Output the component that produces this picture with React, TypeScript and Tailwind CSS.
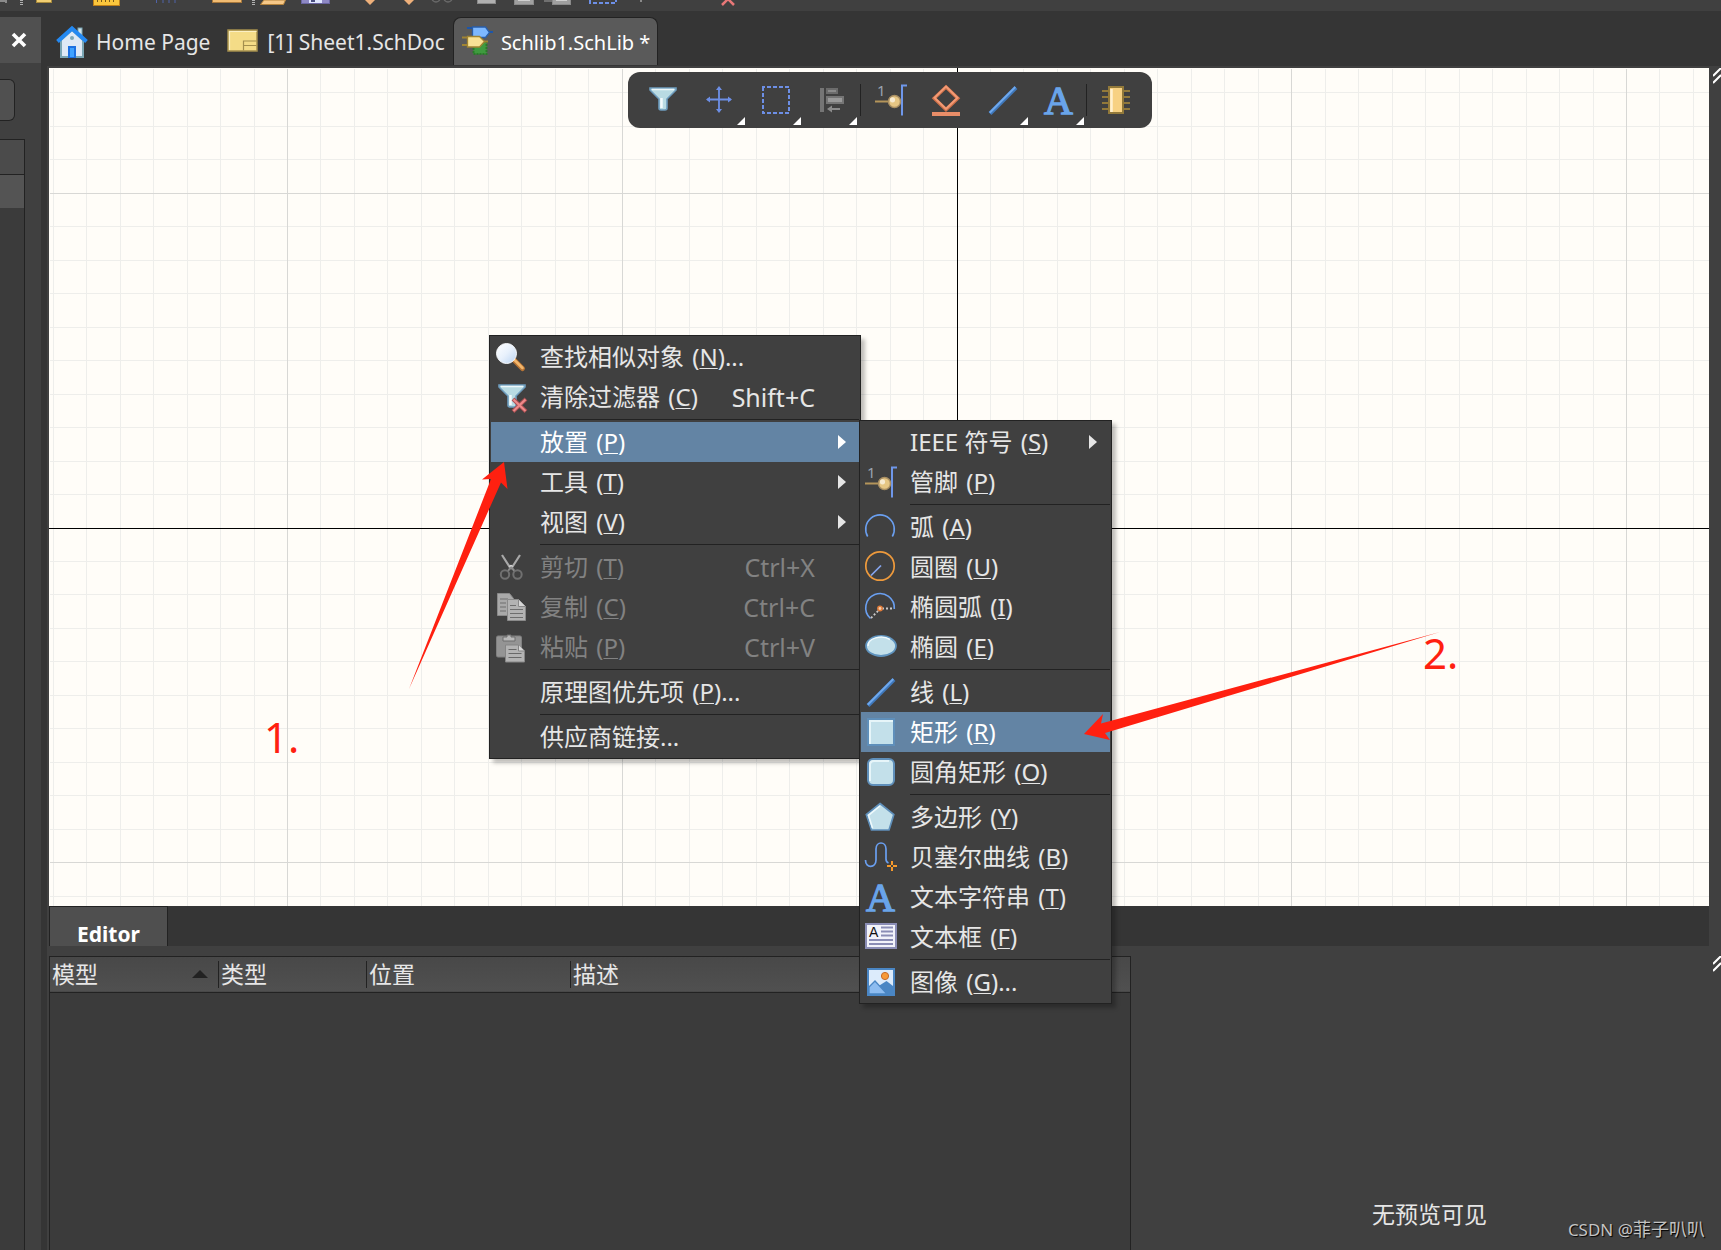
import React from "react";

type IconProps = { children: React.ReactNode };

function Icon({ children }: IconProps) {
  return (
    <svg viewBox="0 0 32 32" className="h-8 w-8 shrink-0 overflow-visible" fill="none" aria-hidden="true">
      {children}
    </svg>
  );
}

const FunnelShape = () => (
  <>
    <path d="M3 4h26v2l-9 9v9q0 2-2 2h-4q-2 0-2-2v-9L3 6z" fill="#b9dbe3" stroke="#6d9cbd" strokeWidth="1.6" />
    <path d="M5 5.500h22" stroke="#eef8fb" strokeWidth="1.500" />
    <path d="M14.500 14v10" stroke="#f2fafc" strokeWidth="2.500" />
  </>
);

const FunnelIcon = () => (
  <Icon>
    <FunnelShape />
  </Icon>
);

const ClearFilterIcon = () => (
  <Icon>
    <g transform="translate(2 0)">
      <FunnelShape />
    </g>
    <path d="M19 18l13 12.500M32 18L19 30.500" stroke="#a94f52" strokeWidth="4" />
    <path d="M19.500 18.500l12 11.500M31.500 18.500l-12 11.500" stroke="#ee8a8a" strokeWidth="2.200" />
  </Icon>
);

const SearchIcon = () => (
  <Icon>
    <defs>
      <linearGradient id="lens" x1="0" y1="0" x2="1" y2="1">
        <stop offset="0" stopColor="#ffffff" />
        <stop offset="0.500" stopColor="#e8f1fc" />
        <stop offset="1" stopColor="#b9d2f2" />
      </linearGradient>
    </defs>
    <path d="M20 19l8.500 8.500" stroke="#b87434" strokeWidth="5" strokeLinecap="round" />
    <path d="M20 18.500l8.500 8.500" stroke="#f3b76c" strokeWidth="2.500" strokeLinecap="round" />
    <circle cx="12.500" cy="12.500" r="10" fill="url(#lens)" stroke="#f7f9fb" strokeWidth="1" />
  </Icon>
);

const ScissorsIcon = () => (
  <Icon>
    <path d="M8 4l9 14M26 4l-9 14" stroke="#a8a8a8" strokeWidth="2.200" />
    <circle cx="17" cy="15.500" r="1.800" fill="#d4d4d4" />
    <path d="M17 16l-3 4M17 16l3.500 4" stroke="#8a8a8a" strokeWidth="2" />
    <circle cx="11" cy="23.500" r="4.200" stroke="#707070" strokeWidth="2" />
    <circle cx="23.500" cy="23.500" r="4.200" stroke="#707070" strokeWidth="2" />
  </Icon>
);

const CopyIcon = () => (
  <Icon>
    <path d="M3.500 2.500h12l4 5v17h-16z" fill="#a9a9a9" stroke="#8a8a8a" />
    <path d="M6 8h8M6 12h6M6 16h6M6 20h6" stroke="#6e6e6e" strokeWidth="1.200" />
    <path d="M13.500 8.500h11l7 7v14h-18z" fill="#b3b3b3" stroke="#8a8a8a" />
    <path d="M24.500 8.500v7h7" fill="#d6d6d6" stroke="#8a8a8a" />
    <path d="M16 14.500h6M16 18.500h13M16 22.500h13M16 26.500h13" stroke="#6e6e6e" strokeWidth="1.200" />
  </Icon>
);

const PasteIcon = () => (
  <Icon>
    <rect x="2.500" y="5" width="25" height="21" rx="1.500" fill="#949494" stroke="#808080" />
    <path d="M9 10V6h4V4h4v2h4v4z" fill="#b8b8b8" stroke="#6d6d6d" />
    <path d="M11.500 14h13l6 6v11h-19z" fill="#b3b3b3" stroke="#858585" />
    <path d="M24.500 14v6h6" fill="#d6d6d6" stroke="#858585" />
    <path d="M14.500 18.500h8M14.500 22.500h13M14.500 26.500h13" stroke="#686868" strokeWidth="1.200" />
  </Icon>
);

const PinIcon = () => (
  <Icon>
    <text x="3" y="12" fontSize="15" fontFamily='"Noto Sans", sans-serif' fill="#9aa3b0">
      1
    </text>
    <path d="M1 17.500h14" stroke="#b4955a" strokeWidth="2" />
    <path d="M33 1.500h-5v30" stroke="#6f97ea" strokeWidth="2" />
    <circle cx="20.500" cy="17.500" r="6" fill="#e6c684" stroke="#a98f63" strokeWidth="1.500" />
    <circle cx="18.500" cy="15.800" r="2.600" fill="#f7ead0" />
  </Icon>
);

const ArcIcon = () => (
  <Icon>
    <path d="M3.700 25.500A14.300 14.300 0 1 1 28.300 25.500" stroke="#6a9ff0" strokeWidth="1.600" />
  </Icon>
);

const CircleIcon = () => (
  <Icon>
    <circle cx="16" cy="15" r="14.200" stroke="#ee9a3c" strokeWidth="1.700" />
    <path d="M17 14.500L7 24.500" stroke="#86a6ee" strokeWidth="1.700" />
  </Icon>
);

const EllipticArcIcon = () => (
  <Icon>
    <path d="M6.500 27.500A14.300 14.300 0 1 1 30.300 18" stroke="#6a9ff0" strokeWidth="1.600" />
    <path d="M7 27l8-8M18 17.500h12" stroke="#c9c9c9" strokeWidth="1.800" strokeDasharray="2 2" />
    <circle cx="16" cy="17.500" r="2.200" fill="#fbd0a8" stroke="#e07b3a" strokeWidth="1.500" />
  </Icon>
);

const EllipseIcon = () => (
  <Icon>
    <ellipse cx="17" cy="15" rx="15" ry="10" fill="#c3e0ea" stroke="#5f93be" strokeWidth="1.800" />
    <path d="M4 15a13 8.500 0 0 1 22-6.500" stroke="#f0fafd" strokeWidth="1.500" />
  </Icon>
);

const LineIcon = () => (
  <Icon>
    <path d="M4 29.500L30 3.500" stroke="#3f78bb" strokeWidth="4" />
    <path d="M3.700 28.700L29.300 3" stroke="#6fa8ec" strokeWidth="2" />
  </Icon>
);

const RectIcon = () => (
  <Icon>
    <rect x="4" y="3" width="26" height="26" fill="#c3e0ea" stroke="#5f8fba" strokeWidth="2" />
    <path d="M6 28V5h23" stroke="#e6f5f9" strokeWidth="2" />
  </Icon>
);

const RoundRectIcon = () => (
  <Icon>
    <rect x="4" y="3" width="26" height="26" rx="5" fill="#c3e0ea" stroke="#5f8fba" strokeWidth="2" />
    <path d="M6 25V9q0-4 4-4h15" stroke="#e6f5f9" strokeWidth="2" />
  </Icon>
);

const PolygonIcon = () => (
  <Icon>
    <path d="M16 2.500L29.800 13.500 25 29H7.500L2.300 13.500z" fill="#c3e0ea" stroke="#5f8fba" strokeWidth="1.700" />
    <path d="M8.500 27L4.500 14.300 16 5" stroke="#eef9fc" strokeWidth="1.500" />
  </Icon>
);

const BezierIcon = () => (
  <Icon>
    <path d="M1.500 19c0 9 10.500 8 10.500 0V8c0-8 10-8 10 0v10q0 3 2.500 4" stroke="#6a9ff0" strokeWidth="1.700" />
    <path d="M28 20v10M23 25h10" stroke="#f59a2c" strokeWidth="2" />
    <rect x="27" y="24" width="2" height="2" fill="#404040" />
  </Icon>
);

const TextIcon = () => (
  <Icon>
    <text
      x="16.500"
      y="29.500"
      textAnchor="middle"
      fontSize="40"
      fontFamily='"Liberation Serif", serif'
      fill="#69a4ea"
      stroke="#69a4ea"
      strokeWidth="1.300"
    >
      A
    </text>
  </Icon>
);

const TextFrameIcon = () => (
  <Icon>
    <rect x="2" y="3" width="30" height="24" fill="#f2f3fa" stroke="#8a8db5" strokeWidth="2" />
    <text x="5" y="16" fontSize="14" fontFamily='"Liberation Sans", sans-serif' fill="#111111">
      A
    </text>
    <path d="M17 6.500h12M17 10.500h12M17 14.500h12M5 19h24M5 23h24" stroke="#8a8db5" strokeWidth="2" />
  </Icon>
);

const ImageIcon = () => (
  <Icon>
    <rect x="4" y="3" width="26" height="26" fill="#dcebfb" stroke="#4a86c4" strokeWidth="2" />
    <path d="M13 21l9.500-6L29 20v8H13z" fill="#4a86c4" />
    <path d="M5 21l6-6 12 13H5z" fill="#8dbcf0" stroke="#4a86c4" strokeWidth="1.300" />
    <circle cx="21" cy="10" r="3.600" fill="#f79a38" stroke="#c46a2a" strokeWidth="1" />
  </Icon>
);

const MoveIcon = () => (
  <Icon>
    <path d="M16 4v23M4.500 15.500h23" stroke="#6d8fe6" strokeWidth="1.800" />
    <path d="M16 2l3 4h-6zM16 29l3-4h-6zM3 15.500l4-3v6zM29 15.500l-4-3v6z" fill="#6d8fe6" />
  </Icon>
);

const MarqueeIcon = () => (
  <Icon>
    <rect x="4" y="3" width="26" height="26" stroke="#6d8fe6" strokeWidth="2" strokeDasharray="4 2" strokeDashoffset="2" />
  </Icon>
);

const AlignIcon = () => (
  <Icon>
    <path d="M7 4v24" stroke="#757575" strokeWidth="4" />
    <rect x="12" y="5" width="10" height="4" fill="#8b8b8b" stroke="#6b6b6b" strokeWidth="2" />
    <rect x="12" y="13" width="16" height="6" fill="#9a9a9a" stroke="#757575" strokeWidth="2" />
    <path d="M15 25h10" stroke="#8b8b8b" strokeWidth="2" />
    <path d="M12 25l5-3.500v7z" fill="#8b8b8b" />
  </Icon>
);

const EraserIcon = () => (
  <Icon>
    <path d="M16 3L27.800 14.300 16 25.600 4.200 14.300z" stroke="#cf7049" strokeWidth="3.400" />
    <path d="M16 2.500L27.500 13.700 16 25 4.500 13.700z" stroke="#f29a75" strokeWidth="1.900" />
    <path d="M2 30h28" stroke="#e98d68" strokeWidth="4" />
  </Icon>
);

const ChipIcon = () => (
  <Icon>
    <path d="M2 7h28M2 13h28M2 19h28M2 25h28" stroke="#92793a" strokeWidth="2" />
    <rect x="9" y="3" width="14" height="26" fill="#f7d182" stroke="#92793a" strokeWidth="2" />
    <path d="M11.500 5v23" stroke="#fff0cf" strokeWidth="2.500" />
  </Icon>
);

const HomeIcon = () => (
  <Icon>
    <rect x="22" y="2" width="4" height="9" fill="#cfe2ea" stroke="#7ba6b4" />
    <path d="M5 14L16 4l11 10v17H5z" fill="#dfe9f5" stroke="#7ba6b4" strokeWidth="2" />
    <rect x="12" y="20" width="8" height="12" fill="#1d70e0" />
    <rect x="14" y="22" width="4" height="9" fill="#3fa2ff" />
    <circle cx="16" cy="12" r="2" fill="#7ba6b4" />
    <path d="M1.500 15.500L16 2.500l14.500 13" stroke="#2489f2" strokeWidth="4" />
  </Icon>
);

const SheetIcon = () => (
  <Icon>
    <rect x="1" y="4" width="29" height="21" fill="#f4dc87" stroke="#a48f4e" strokeWidth="1.500" />
    <path d="M2.500 24V5.500h27" stroke="#fbf0c4" strokeWidth="1.200" />
    <path d="M29.500 15h-13v9.500M16.500 19.500h13" stroke="#a48f4e" strokeWidth="1.200" />
  </Icon>
);

const SchLibIcon = () => (
  <Icon>
    <rect x="12.500" y="16" width="13" height="12" fill="#3f9a3f" stroke="#2a7a2a" strokeWidth="2" strokeDasharray="2 1" />
    <path d="M6 2h6M25 6h7" stroke="#1d56a8" strokeWidth="2" />
    <path d="M11.500 1h13l4 5.500-4 5h-13z" fill="#7db8ff" stroke="#2a5ea8" strokeWidth="1.300" />
    <path d="M1 11.500h6M1 19h6M22 15.500h5" stroke="#a08432" strokeWidth="2" />
    <path d="M6.500 10.500h12l5 5-5 5.500h-12z" fill="#f9e295" stroke="#a08432" strokeWidth="1.300" />
  </Icon>
);

type Entry =
  | { kind: "sep" }
  | {
      kind: "item";
      label: string;
      mnemonic?: string;
      tail?: string;
      shortcut?: string;
      submenu?: boolean;
      active?: boolean;
      disabled?: boolean;
      icon?: React.ReactNode;
    };

const sep: Entry = { kind: "sep" };

const contextMenu: Entry[] = [
  { kind: "item", label: "查找相似对象", mnemonic: "N", tail: "...", icon: <SearchIcon /> },
  { kind: "item", label: "清除过滤器", mnemonic: "C", shortcut: "Shift+C", icon: <ClearFilterIcon /> },
  sep,
  { kind: "item", label: "放置", mnemonic: "P", submenu: true, active: true },
  { kind: "item", label: "工具", mnemonic: "T", submenu: true },
  { kind: "item", label: "视图", mnemonic: "V", submenu: true },
  sep,
  { kind: "item", label: "剪切", mnemonic: "T", shortcut: "Ctrl+X", disabled: true, icon: <ScissorsIcon /> },
  { kind: "item", label: "复制", mnemonic: "C", shortcut: "Ctrl+C", disabled: true, icon: <CopyIcon /> },
  { kind: "item", label: "粘贴", mnemonic: "P", shortcut: "Ctrl+V", disabled: true, icon: <PasteIcon /> },
  sep,
  { kind: "item", label: "原理图优先项", mnemonic: "P", tail: "..." },
  sep,
  { kind: "item", label: "供应商链接..." },
];

const placeMenu: Entry[] = [
  { kind: "item", label: "IEEE 符号", mnemonic: "S", submenu: true },
  { kind: "item", label: "管脚", mnemonic: "P", icon: <PinIcon /> },
  sep,
  { kind: "item", label: "弧", mnemonic: "A", icon: <ArcIcon /> },
  { kind: "item", label: "圆圈", mnemonic: "U", icon: <CircleIcon /> },
  { kind: "item", label: "椭圆弧", mnemonic: "I", icon: <EllipticArcIcon /> },
  { kind: "item", label: "椭圆", mnemonic: "E", icon: <EllipseIcon /> },
  sep,
  { kind: "item", label: "线", mnemonic: "L", icon: <LineIcon /> },
  { kind: "item", label: "矩形", mnemonic: "R", active: true, icon: <RectIcon /> },
  { kind: "item", label: "圆角矩形", mnemonic: "O", icon: <RoundRectIcon /> },
  sep,
  { kind: "item", label: "多边形", mnemonic: "Y", icon: <PolygonIcon /> },
  { kind: "item", label: "贝塞尔曲线", mnemonic: "B", icon: <BezierIcon /> },
  { kind: "item", label: "文本字符串", mnemonic: "T", icon: <TextIcon /> },
  { kind: "item", label: "文本框", mnemonic: "F", icon: <TextFrameIcon /> },
  sep,
  { kind: "item", label: "图像", mnemonic: "G", tail: "...", icon: <ImageIcon /> },
];

function Menu({ entries, label, className }: { entries: Entry[]; label: string; className: string }) {
  return (
    <div
      role="menu"
      aria-label={label}
      className={
        "absolute flex flex-col border border-[#222222] bg-[#404040] p-px text-2xl/10 text-[#e6e6e6] shadow-[4px_4px_4px_rgba(0,0,0,0.25)] " +
        className
      }
    >
      {entries.map((e, i) =>
        e.kind === "sep" ? (
          <div key={i} role="separator" className="ml-[49px] h-[5px] pt-[2px]">
            <div className="h-px bg-[#222222]" />
          </div>
        ) : (
          <button
            key={i}
            type="button"
            role="menuitem"
            disabled={e.disabled}
            className={
              "flex h-10 items-center pl-[3px] text-left whitespace-nowrap " +
              (e.active ? "bg-[#6384a4] text-white" : e.disabled ? "text-[#828282]" : "")
            }
          >
            <span className="mr-3.5 flex h-8 w-8 shrink-0">{e.icon}</span>
            <span className="flex-1">
              {e.label}
              {e.mnemonic && (
                <span className="ml-0.5">
                  {" ("}
                  <span className="underline decoration-1 underline-offset-2">{e.mnemonic}</span>
                  {")"}
                </span>
              )}
              {e.tail}
            </span>
            {e.shortcut && <span className="mr-11 text-[25px]/10">{e.shortcut}</span>}
            {e.submenu && (
              <svg viewBox="0 0 8 14" className="mr-[13px] h-3.5 w-2" aria-hidden="true">
                <path d="M0 0l8 7-8 7z" fill="currentColor" />
              </svg>
            )}
          </button>
        ),
      )}
    </div>
  );
}

function ToolButton({ label, corner, children }: { label: string; corner?: boolean; children: React.ReactNode }) {
  return (
    <button type="button" aria-label={label} className="relative flex h-14 w-14 items-center justify-center">
      {children}
      {corner && (
        <svg viewBox="0 0 8 8" className="absolute right-0.5 bottom-[3px] h-2 w-2" aria-hidden="true">
          <path d="M8 0v8H0z" fill="#ffffff" />
        </svg>
      )}
    </button>
  );
}

const ToolDivider = () => (
  <div className="h-8 w-0.5 pr-px">
    <div className="h-8 w-px bg-[#222222]" />
  </div>
);

function FloatingToolbar() {
  return (
    <div
      role="toolbar"
      aria-label="Active bar"
      className="absolute top-1 left-[579px] flex items-center rounded-xl bg-[#404040] pr-2 pl-[7px]"
    >
      <ToolButton label="Filter"><FunnelIcon /></ToolButton>
      <ToolButton label="Move" corner><MoveIcon /></ToolButton>
      <ToolButton label="Select" corner><MarqueeIcon /></ToolButton>
      <ToolButton label="Align" corner><AlignIcon /></ToolButton>
      <div className="pl-px">
        <ToolDivider />
      </div>
      <ToolButton label="Pin"><PinIcon /></ToolButton>
      <ToolButton label="Symbol"><EraserIcon /></ToolButton>
      <ToolButton label="Line" corner><LineIcon /></ToolButton>
      <ToolButton label="Text" corner><TextIcon /></ToolButton>
      <ToolDivider />
      <ToolButton label="Part"><ChipIcon /></ToolButton>
    </div>
  );
}

const AXIS_X = 908;
const AXIS_Y = 460;
const STEP = 33.475;

function minorSteps(from: number, to: number) {
  return Array.from({ length: to - from + 1 }, (_, i) => from + i).filter((k) => k % 10 !== 0);
}

function Grid() {
  return (
    <svg className="absolute inset-0 h-full w-full" shapeRendering="crispEdges" aria-hidden="true">
      {minorSteps(-27, 60).map((k) => (
        <rect key={"v" + k} x={Math.floor(AXIS_X + k * STEP)} y="1" width="1" height="100%" fill="#eeeeeb" />
      ))}
      {minorSteps(-13, 40).map((k) => (
        <rect key={"h" + k} x="1" y={Math.floor(AXIS_Y + k * STEP)} width="100%" height="1" fill="#eeeeeb" />
      ))}
      {[-20, -10, 10, 20, 30, 40].map((k) => (
        <rect key={"V" + k} x={Math.floor(AXIS_X + k * STEP)} y="1" width="1" height="100%" fill="#d8d8d5" />
      ))}
      {[-10, 10, 20, 30].map((k) => (
        <rect key={"H" + k} x="1" y={Math.floor(AXIS_Y + k * STEP)} width="100%" height="1" fill="#d8d8d5" />
      ))}
      <rect x={AXIS_X} y="0" width="1" height="100%" fill="#000000" />
      <rect x="0" y={AXIS_Y} width="100%" height="1" fill="#000000" />
    </svg>
  );
}

function Annotations() {
  return (
    <>
      <svg className="pointer-events-none absolute inset-0 h-full w-full" aria-hidden="true">
        <path d="M455 394l3.500 27-6.500-6.500L360 621l82-210-9 .500z" fill="#ff2010" />
        <path d="M1035 666l19-20-2 9.500L1391 564 1056 665l5 7z" fill="#ff2010" />
      </svg>
      <span className="absolute top-[641px] left-[215px] text-[42px]/[56px] text-[#ff2010]">1.</span>
      <span className="absolute top-[557px] left-[1374px] text-[42px]/[56px] text-[#ff2010]">2.</span>
    </>
  );
}

function Tab({ icon, label, className }: { icon: React.ReactNode; label: string; className: string }) {
  return (
    <button type="button" role="tab" className={"flex items-center gap-2 whitespace-nowrap " + className}>
      {icon}
      <span className="pt-0.5">{label}</span>
    </button>
  );
}

const CollapseMark = () => (
  <svg viewBox="0 0 8 16" className="h-4 w-2" fill="none" aria-hidden="true">
    <path d="M0 8l8-8M0 15l8-8" stroke="#ffffff" strokeWidth="2" />
  </svg>
);

function Clipped({ className, width, children }: { className: string; width: number; children: React.ReactNode }) {
  return (
    <svg width={width} height="7" viewBox={"0 0 " + width + " 7"} className={"shrink-0 " + className} fill="none" aria-hidden="true">
      {children}
    </svg>
  );
}

const Grip = ({ className }: { className: string }) => (
  <Clipped className={className} width={3}>
    <path d="M1.500 0v6" stroke="#b0b0b0" strokeWidth="3" strokeDasharray="1 1" />
  </Clipped>
);

function MainToolbar() {
  return (
    <div className="flex h-[11px] shrink-0 overflow-hidden bg-[#404040]">
      <Clipped className="" width={8}><path d="M0 1h6v2" stroke="#8a8a8a" strokeWidth="2" /></Clipped>
      <Grip className="ml-3" />
      <Clipped className="ml-[13px]" width={16}><rect x="0.500" y="-4" width="15" height="6.500" fill="#f2cf72" stroke="#a88a3c" /></Clipped>
      <Clipped className="ml-[41px]" width={27}>
        <rect x="0.500" y="-8" width="26" height="13.500" fill="#fbc63c" stroke="#c08018" />
        <path d="M4.500 0v2M8.500 0v2M12.500 0v2M16.500 0v2M20.500 0v2" stroke="#7a5a18" />
      </Clipped>
      <Clipped className="ml-9" width={20}><path d="M.500 0v3M7 0v3M13 0v3M19 0v3" stroke="#4f62a8" /></Clipped>
      <Clipped className="ml-9" width={30}><rect x="0.500" y="-5" width="29" height="7.500" fill="#f2bc72" stroke="#a8783c" /></Clipped>
      <Grip className="ml-[10px]" />
      <Clipped className="ml-[5px]" width={26}><path d="M.500 4.500L4 0h21.500l-2 4.500z" fill="#f6c888" stroke="#b5833c" /></Clipped>
      <Clipped className="ml-[15px]" width={29}>
        <rect x="0.500" y="-6" width="28" height="9.500" fill="#8d88c4" stroke="#6a65a0" />
        <rect x="8" y="-6" width="13" height="9" fill="#dfe6ff" />
        <rect x="10" y="-3" width="4" height="5" fill="#4a4f80" />
      </Clipped>
      <Clipped className="ml-[35px]" width={10}><path d="M0 0h10L5 5z" fill="#eeb07a" /></Clipped>
      <Clipped className="ml-[29px]" width={10}><path d="M0 0h10L5 5z" fill="#eeb07a" /></Clipped>
      <Clipped className="ml-[17px]" width={22}>
        <circle cx="5" cy="-2" r="4" stroke="#6a6a6a" strokeWidth="1.500" />
        <circle cx="17" cy="-2" r="4" stroke="#6a6a6a" strokeWidth="1.500" />
      </Clipped>
      <Clipped className="ml-6" width={19}><rect x="0.500" y="-5" width="18" height="8.500" fill="#b0b0b0" stroke="#8a8a8a" /></Clipped>
      <Clipped className="ml-[18px]" width={20}>
        <rect x="0.500" y="-5" width="19" height="9.500" fill="#a0a0a0" stroke="#8a8a8a" />
        <rect x="4" y="-3" width="12" height="4" fill="#d0d0d0" />
      </Clipped>
      <Clipped className="ml-[10px]" width={27}>
        <path d="M0 1h8" stroke="#a0a0a0" />
        <rect x="8.500" y="-5" width="18" height="9.500" fill="#a0a0a0" stroke="#8a8a8a" />
        <rect x="12" y="-3" width="11" height="4" fill="#d0d0d0" />
      </Clipped>
      <Clipped className="ml-[18px]" width={28}><path d="M1 0v3h26V0" stroke="#6d8fe6" strokeWidth="2" strokeDasharray="4 2" /></Clipped>
      <Clipped className="ml-[22px]" width={4}><path d="M2 0v2" stroke="#8a8a8a" strokeWidth="2" /></Clipped>
      <Clipped className="ml-[78px]" width={14}><path d="M1 5l6-6 6 6" stroke="#e87878" strokeWidth="2.500" /></Clipped>
    </div>
  );
}

function SidePanel() {
  return (
    <aside className="flex w-[41px] shrink-0 flex-col bg-[#404040]">
      <div className="h-1.5 bg-[#353535]" />
      <button type="button" aria-label="Close panel" className="flex h-[46px] items-center justify-end bg-[#505050] pr-[14px]">
        <svg viewBox="0 0 16 16" className="h-4 w-4" fill="none" aria-hidden="true">
          <path d="M2 2l12 12M14 2L2 14" stroke="#ffffff" strokeWidth="3.600" />
        </svg>
      </button>
      <div className="mt-4 h-[42px] w-[15px] rounded-r-md border border-l-0 border-[#222222] bg-[#505050]" />
      <div className="mt-[18px] flex w-[25px] flex-1 flex-col border-t border-r border-[#222222] bg-[#3b3b3b]">
        <div className="h-[35px] border-b border-[#222222] bg-[#4b4b4b]" />
        <div className="h-[33px] bg-[#545454]" />
      </div>
    </aside>
  );
}

const thClass = "p-0 text-left align-middle font-normal";

function ModelTable() {
  return (
    <div className="min-w-0 flex-1 border-x border-t border-[#222222] bg-[#3b3b3b]">
      <table className="w-full table-fixed border-collapse">
        <thead>
          <tr className="h-[35px] border-b border-[#222222] bg-linear-to-b from-[#484848] to-[#505050] text-[23px]/[27px] text-[#e6e6e6]">
            <th scope="col" className={thClass + " w-[169px]"}>
              <div className="flex items-center border-r border-[#222222] pr-[10px] pl-0.5">
                <span className="flex-1">模型</span>
                <svg viewBox="0 0 16 8" className="h-2 w-4" aria-hidden="true">
                  <path d="M8 0l8 8H0z" fill="#222222" />
                </svg>
              </div>
            </th>
            <th scope="col" className={thClass + " w-[148px]"}>
              <div className="border-r border-[#222222] pl-0.5">类型</div>
            </th>
            <th scope="col" className={thClass + " w-[204px]"}>
              <div className="border-r border-[#222222] pl-0.5">位置</div>
            </th>
            <th scope="col" className={thClass}>
              <div className="pl-0.5">描述</div>
            </th>
          </tr>
        </thead>
      </table>
    </div>
  );
}

export default function App() {
  return (
    <div className="relative flex min-h-screen flex-col overflow-hidden bg-[#404040] font-['Noto_Sans','Noto_Sans_CJK_SC',sans-serif] text-[#e6e6e6]">
      <MainToolbar />
      <div className="flex flex-1">
        <SidePanel />
        <div className="w-1.5 shrink-0 bg-[#353535]" />
        <div className="flex min-w-0 flex-1 flex-col pl-0.5">
          <div role="tablist" aria-label="Documents" className="-ml-0.5 flex h-[55px] items-start bg-[#353535] pt-1.5 pl-[9px]">
            <Tab icon={<HomeIcon />} label="Home Page" className="h-[50px] text-[21px]" />
            <Tab icon={<SheetIcon />} label="[1] Sheet1.SchDoc" className="ml-[17px] h-[50px] text-[21px]" />
            <Tab
              icon={<SchLibIcon />}
              label="Schlib1.SchLib *"
              className="ml-2 h-12 rounded-t-lg border border-b-0 border-[#222222] bg-[#5a5a5a] px-[7px] text-[20px] text-white"
            />
          </div>
          <div className="flex flex-1 pt-0.5">
            <div className="flex min-w-0 flex-1 flex-col">
              <main className="relative z-10 flex-1 bg-[#fffdf8]">
                <Grid />
                <FloatingToolbar />
                <Menu entries={contextMenu} label="Context menu" className="top-[267px] left-[440px] w-[372px]" />
                <Menu entries={placeMenu} label="放置" className="top-[352px] left-[810px] w-[253px]" />
                <Annotations />
              </main>
              <div role="tablist" aria-label="Panels" className="flex h-10 bg-[#353535]">
                <button
                  type="button"
                  role="tab"
                  className="border border-b-0 border-[#222222] bg-[#4f4f4f] px-[27px] pt-3.5 text-[21px]/[26px] font-bold text-white"
                >
                  Editor
                </button>
              </div>
            </div>
            <div className="flex w-3 shrink-0 justify-end bg-[#404040]">
              <CollapseMark />
            </div>
          </div>
          <div className="flex h-[304px] shrink-0 pt-2.5">
            <ModelTable />
            <section aria-label="Preview" className="relative flex w-[590px] shrink-0 items-end justify-center pb-[21px] pl-[7px] text-[23px]/[30px]">
              无预览可见
              <span className="absolute top-0 right-0">
                <CollapseMark />
              </span>
            </section>
          </div>
        </div>
      </div>
      <div className="absolute right-4 bottom-[7px] text-[17px]/[26px] text-[#c4c4c4] [text-shadow:1px_1px_1px_#000000]">
        CSDN @<span className="text-[18px]">菲子叭叭</span>
      </div>
    </div>
  );
}
